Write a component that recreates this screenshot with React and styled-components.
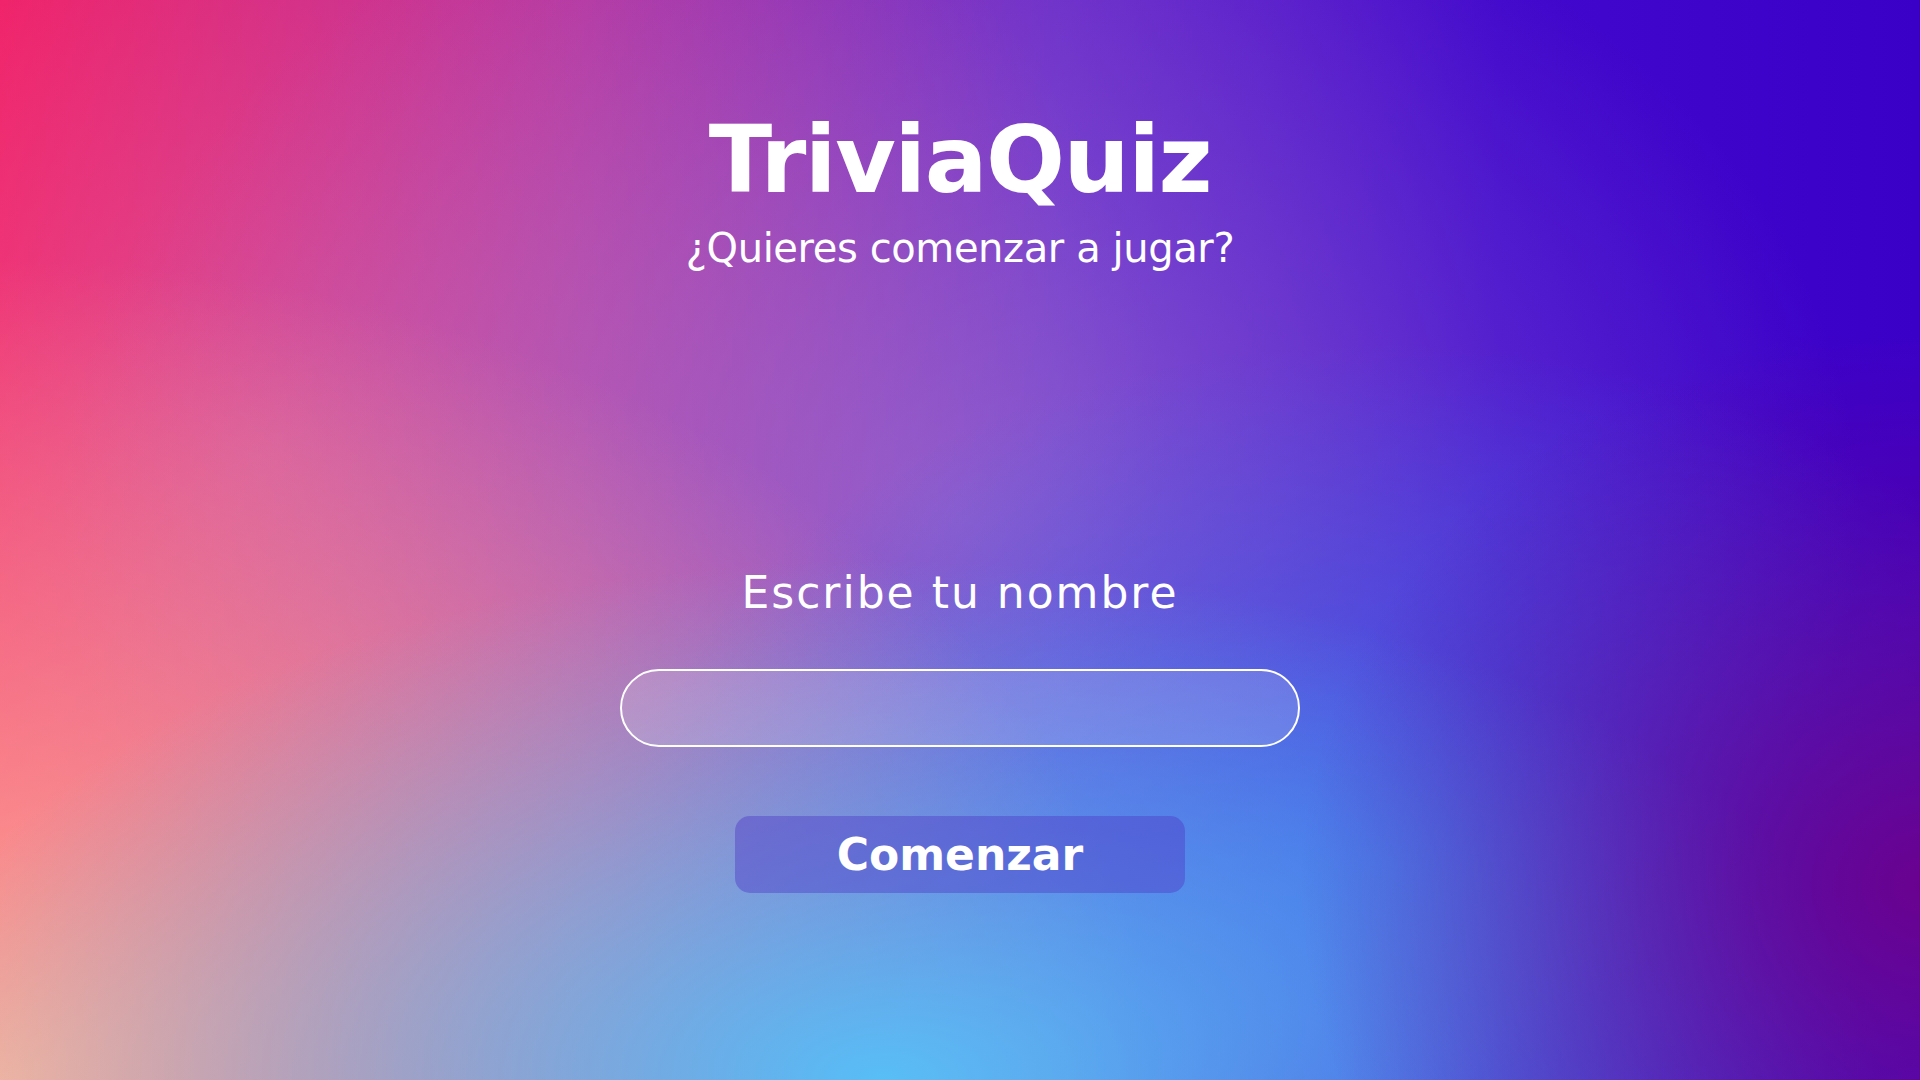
import React from 'react';
import styled, { createGlobalStyle } from 'styled-components';

const GlobalStyle = createGlobalStyle`
  html, body {
    margin: 0;
    padding: 0;
  }
  body {
    font-family: 'DejaVu Sans', 'Noto Sans', sans-serif;
    color: white;
  }
`;

const Page = styled.main`
  min-height: 100vh;
  box-sizing: border-box;
  display: flex;
  flex-direction: column;
  align-items: center;
  padding-top: 114px;
  background:
    radial-gradient(620px 560px at 100% 82%, rgba(108, 0, 140, 0.95), rgba(108, 0, 140, 0)),
    radial-gradient(1000px 520px at 46% 100%, rgba(88, 190, 246, 1), rgba(88, 190, 246, 0)),
    radial-gradient(1150px 820px at 0% 100%, rgba(255, 178, 152, 1), rgba(255, 178, 152, 0)),
    radial-gradient(760px 520px at 72% 80%, rgba(58, 108, 236, 0.8), rgba(58, 108, 236, 0)),
    radial-gradient(900px 700px at 50% 48%, rgba(150, 120, 215, 0.6), rgba(150, 120, 215, 0)),
    radial-gradient(900px 760px at 14% 42%, rgba(230, 120, 170, 0.55), rgba(230, 120, 170, 0)),
    linear-gradient(90deg, #f2115c 0%, #b02a9e 30%, #6a28c8 55%, #4208cc 78%, #3a00c8 100%);
`;

const Header = styled.header`
  display: flex;
  flex-direction: column;
  align-items: center;
  gap: 21px;
`;

const Title = styled.h1`
  margin: 0;
  font-size: 93px;
  line-height: 1;
  font-weight: 700;
  letter-spacing: -1.5px;
`;

const Subtitle = styled.p`
  margin: 0;
  font-size: 40px;
  line-height: 1;
  font-weight: 400;
  letter-spacing: -0.4px;
`;

const Form = styled.form`
  margin-top: 303px;
  display: flex;
  flex-direction: column;
  align-items: center;
`;

const Label = styled.label`
  font-size: 44px;
  line-height: 1;
  font-weight: 400;
  letter-spacing: 2px;
`;

const NameInput = styled.input`
  margin-top: 54px;
  width: 680px;
  height: 78px;
  box-sizing: border-box;
  border: 2px solid #fff;
  border-radius: 40px;
  background: rgba(255, 255, 255, 0.15);
  color: #fff;
  font-family: inherit;
  font-size: 28px;
  padding: 0 32px;
  outline: none;
`;

const StartButton = styled.button`
  margin-top: 69px;
  width: 450px;
  height: 77px;
  border: none;
  border-radius: 15px;
  background: rgba(80, 60, 200, 0.45);
  color: #fff;
  font-family: inherit;
  font-size: 44px;
  font-weight: 700;
  letter-spacing: 0;
  cursor: pointer;
`;

export default function App() {
  return (
    <>
      <GlobalStyle />
      <Page>
        <Header>
          <Title>TriviaQuiz</Title>
          <Subtitle>¿Quieres comenzar a jugar?</Subtitle>
        </Header>
        <Form onSubmit={(e) => e.preventDefault()}>
          <Label htmlFor="name">Escribe tu nombre</Label>
          <NameInput id="name" type="text" />
          <StartButton type="submit">Comenzar</StartButton>
        </Form>
      </Page>
    </>
  );
}
